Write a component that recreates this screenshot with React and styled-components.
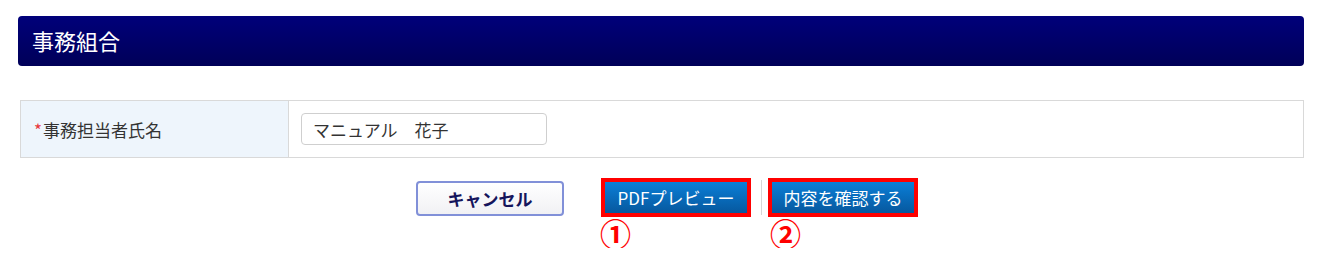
import React from "react";
import styled, { createGlobalStyle } from "styled-components";

const GlobalStyle = createGlobalStyle`
  body {
    margin: 0;
    background: #fff;
    font-family: "Noto Sans CJK JP", "Noto Sans", sans-serif;
    color: #333;
  }
`;

const Page = styled.div`
  padding: 16px 18px 0 18px;
  width: 1322px;
  box-sizing: border-box;
`;

const Header = styled.div`
  height: 50px;
  border-radius: 4px;
  background: linear-gradient(#00007a, #000058);
  display: flex;
  align-items: center;
  padding: 0 14px 2px;
  box-sizing: border-box;
  color: #fff;
  font-size: 22px;
`;

const Table = styled.div`
  margin: 34px 0 0 2px;
  display: flex;
  height: 58px;
  border: 1px solid #d9d9d9;
  box-sizing: border-box;
`;

const Label = styled.div`
  width: 268px;
  box-sizing: border-box;
  background: #eef5fc;
  border-right: 1px solid #d9d9d9;
  display: flex;
  align-items: center;
  padding-left: 13px;
  font-size: 17px;
  color: #333;
`;

const Required = styled.span`
  color: #e8383d;
  margin-right: 1px;
`;

const Field = styled.div`
  flex: 1;
  display: flex;
  align-items: center;
  padding-left: 12px;
`;

const Input = styled.input`
  width: 246px;
  height: 32px;
  box-sizing: border-box;
  border: 1px solid #cfcfcf;
  border-radius: 4px;
  padding: 0 11px;
  font-family: inherit;
  font-size: 17px;
  color: #333;
  outline: none;
`;

const Actions = styled.div`
  display: flex;
  justify-content: center;
  align-items: flex-start;
  margin-top: 20px;
  padding-left: 12px;
`;

const CancelButton = styled.button`
  width: 148px;
  height: 35px;
  margin-top: 3px;
  margin-right: 37px;
  border: 2px solid #8190d8;
  border-radius: 4px;
  background: linear-gradient(#ffffff, #f1f1f4);
  color: #15155c;
  font-family: inherit;
  font-weight: bold;
  font-size: 17px;
  cursor: pointer;
`;

const Annotated = styled.div`
  display: flex;
  flex-direction: column;
  align-items: flex-start;
`;

const Highlight = styled.div`
  border: 4px solid #f00;
  width: 150px;
  height: 39px;
  box-sizing: border-box;
  display: flex;
`;

const PrimaryButton = styled.button`
  flex: 1;
  border: none;
  background: linear-gradient(#0a7fd8, #07589e);
  color: #fff;
  font-family: inherit;
  font-size: 17px;
  padding: 0;
  cursor: pointer;
`;

const Divider = styled.div`
  width: 1px;
  height: 35px;
  margin: 2px 6px 0 10px;
  background: #d6d6d6;
`;

const Marker = styled.span`
  color: #f00;
  font-size: 31px;
  font-weight: bold;
  line-height: 30px;
  margin-top: 1px;
  margin-left: ${(p) => p.$offset || 0}px;
`;

export default function App() {
  return (
    <>
      <GlobalStyle />
      <Page>
        <Header>事務組合</Header>
        <Table>
          <Label>
            <Required>*</Required>事務担当者氏名
          </Label>
          <Field>
            <Input defaultValue="マニュアル　花子" />
          </Field>
        </Table>
        <Actions>
          <CancelButton>キャンセル</CancelButton>
          <Annotated>
            <Highlight>
              <PrimaryButton>PDFプレビュー</PrimaryButton>
            </Highlight>
            <Marker $offset={-1}>①</Marker>
          </Annotated>
          <Divider />
          <Annotated>
            <Highlight>
              <PrimaryButton>内容を確認する</PrimaryButton>
            </Highlight>
            <Marker $offset={2}>②</Marker>
          </Annotated>
        </Actions>
      </Page>
    </>
  );
}
